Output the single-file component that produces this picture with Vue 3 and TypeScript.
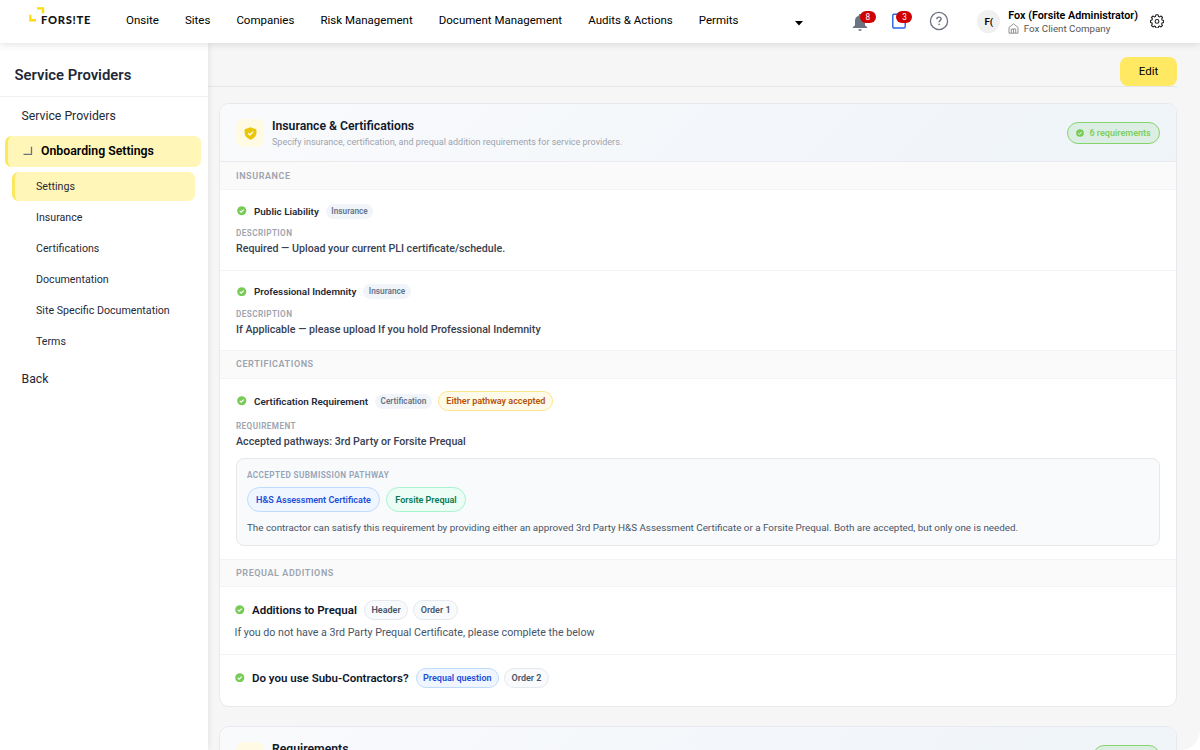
<script setup lang="ts">
interface Pill { text: string; kind: string }

const navItems: string[] = ['Onsite', 'Sites', 'Companies', 'Risk Management', 'Document Management', 'Audits & Actions', 'Permits']
const subItems: string[] = ['Settings', 'Insurance', 'Certifications', 'Documentation', 'Site Specific Documentation', 'Terms']

const insurance: { title: string; text: string }[] = [
  { title: 'Public Liability', text: 'Required — Upload your current PLI certificate/schedule.' },
  { title: 'Professional Indemnity', text: 'If Applicable — please upload If you hold Professional Indemnity' },
]

const additions: { title: string; pills: Pill[]; text?: string }[] = [
  {
    title: 'Additions to Prequal',
    pills: [{ text: 'Header', kind: 'plain' }, { text: 'Order 1', kind: 'plain' }],
    text: 'If you do not have a 3rd Party Prequal Certificate, please complete the below',
  },
  {
    title: 'Do you use Subu-Contractors?',
    pills: [{ text: 'Prequal question', kind: 'question' }, { text: 'Order 2', kind: 'plain' }],
  },
]
</script>

<template>
  <div class="app">
    <header class="topbar">
      <div class="logo">
        <svg class="logo-mark" width="16" height="15" viewBox="0 0 16 15">
          <path d="M8 .2h7.200v6h-2.400V2.500H8zM.2 7.800h2.300v4.200H7v2.400H.2z" fill="#fcdc12" />
        </svg>
        <span class="logo-text">FORS!TE</span>
      </div>
      <nav class="nav">
        <a v-for="item in navItems" :key="item">{{ item }}</a>
      </nav>
      <svg class="caret" width="8" height="5" viewBox="0 0 8 5"><path d="M0 0h8L4 4.600z" fill="#000" /></svg>
      <div class="tools">
        <div class="tool bell">
          <svg width="16" height="19" viewBox="0 0 16 19" fill="#6b7280">
            <path d="M8 1c.8 0 1.300.5 1.300 1.200v.6c2.300.6 3.700 2.500 3.700 5v4.400l2.200 2v.9H.8v-.9l2.200-2V7.800c0-2.500 1.400-4.400 3.700-5v-.6C6.700 1.500 7.200 1 8 1zM6.200 16.200h3.600a1.800 1.800 0 0 1-3.600 0z" />
          </svg>
          <span class="badge">8</span>
        </div>
        <div class="tool clip">
          <svg width="14" height="17" viewBox="0 0 14 17" fill="none" stroke="#2563eb" stroke-width="1.400">
            <rect x=".8" y="2.200" width="12.400" height="13.800" rx="1.200" />
          </svg>
          <span class="badge">3</span>
        </div>
        <svg class="help" width="20" height="20" viewBox="0 0 20 20" fill="none" stroke="#6b7280">
          <circle cx="10" cy="10" r="8.600" stroke-width="1.300" />
          <path d="M7.900 8.200c0-1.300.9-2.100 2.100-2.100s2.100.8 2.100 1.900c0 1.600-2 1.700-2 3.300" stroke-width="1.400" />
          <circle cx="10.100" cy="13.300" r=".5" fill="#6b7280" stroke-width=".7" />
        </svg>
      </div>
      <div class="avatar">F(</div>
      <div class="user">
        <div class="user-name">Fox (Forsite Administrator)</div>
        <div class="user-co">
          <svg width="11" height="11" viewBox="0 0 11 11" fill="none" stroke="#777" stroke-width=".8">
            <path d="M1 4.400 5.500.8 10 4.400v5.800H1zM3.300 10V6h4.400v4M5.500 6v4" />
          </svg>
          <span>Fox Client Company</span>
        </div>
      </div>
      <svg class="gear" width="14" height="14" viewBox="0 0 14 14" fill="none" stroke="#222" stroke-width="1.100" stroke-linejoin="round">
        <path d="M5.900.8h2.200l.4 1.600 1.100.5 1.500-.9 1.400 1.500-.8 1.400.4 1.100 1.500.5v2l-1.500.4-.5 1.100.8 1.500-1.400 1.400-1.500-.8-1 .5-.4 1.500H5.900l-.4-1.500-1.100-.5-1.400.8-1.500-1.400.8-1.500-.4-1.100L.5 8.500v-2l1.400-.5.5-1.100-.9-1.400L3 2l1.400.9 1.100-.5z" />
        <circle cx="7" cy="7.400" r="1.900" />
      </svg>
    </header>

    <div class="body">
      <aside class="sidebar">
        <div class="side-title">Service Providers</div>
        <div class="side-link">Service Providers</div>
        <div class="side-group">
          <svg width="10" height="10" viewBox="0 0 10 10" fill="none" stroke="#6b7280" stroke-width="1.300"><path d="M.5 8.400h8V.8" /></svg>
          <span>Onboarding Settings</span>
        </div>
        <div class="sub-list">
          <div v-for="(s, i) in subItems" :key="s" class="sub" :class="{ active: i === 0 }">{{ s }}</div>
        </div>
        <div class="side-link back">Back</div>
      </aside>

      <main class="main">
        <div class="toolbar"><button class="edit">Edit</button></div>

        <section class="card">
          <div class="card-head">
            <div class="card-icon">
              <svg width="13" height="13" viewBox="0 0 13 13">
                <path d="M6.500.3 12.400 2.300v3.400c0 3.300-2.400 5.700-5.900 7-3.500-1.300-5.900-3.700-5.900-7V2.300z" fill="#eac60b" />
                <path d="m4.200 6.300 1.700 1.700 3.100-3.200" fill="none" stroke="#fffbe6" stroke-width="1.300" />
              </svg>
            </div>
            <div class="card-titles">
              <div class="card-title">Insurance &amp; Certifications</div>
              <div class="card-sub">Specify insurance, certification, and prequal addition requirements for service providers.</div>
            </div>
            <div class="count">
              <svg class="check" viewBox="0 0 10 10"><circle cx="5" cy="5" r="4.800" /><path d="m2.900 5.100 1.500 1.500 2.700-2.800" /></svg>
              <span>6 requirements</span>
            </div>
          </div>

          <div class="band first">INSURANCE</div>
          <div v-for="row in insurance" :key="row.title" class="item">
            <div class="item-head">
              <svg class="check" viewBox="0 0 10 10"><circle cx="5" cy="5" r="4.800" /><path d="m2.900 5.100 1.500 1.500 2.700-2.800" /></svg>
              <span class="item-title">{{ row.title }}</span>
              <span class="tag">Insurance</span>
            </div>
            <div class="label">DESCRIPTION</div>
            <div class="value">{{ row.text }}</div>
          </div>

          <div class="band">CERTIFICATIONS</div>
          <div class="item cert">
            <div class="item-head">
              <svg class="check" viewBox="0 0 10 10"><circle cx="5" cy="5" r="4.800" /><path d="m2.900 5.100 1.500 1.500 2.700-2.800" /></svg>
              <span class="item-title">Certification Requirement</span>
              <span class="tag">Certification</span>
              <span class="either">Either pathway accepted</span>
            </div>
            <div class="label">REQUIREMENT</div>
            <div class="value">Accepted pathways: 3rd Party or Forsite Prequal</div>
            <div class="pathway">
              <div class="path-label">ACCEPTED SUBMISSION PATHWAY</div>
              <div class="path-pills">
                <span class="path-pill blue">H&amp;S Assessment Certificate</span>
                <span class="path-pill green">Forsite Prequal</span>
              </div>
              <div class="path-text">The contractor can satisfy this requirement by providing either an approved 3rd Party H&amp;S Assessment Certificate or a Forsite Prequal. Both are accepted, but only one is needed.</div>
            </div>
          </div>

          <div class="band third">PREQUAL ADDITIONS</div>
          <div v-for="row in additions" :key="row.title" class="addition">
            <div class="add-head">
              <svg class="check" viewBox="0 0 10 10"><circle cx="5" cy="5" r="4.800" /><path d="m2.900 5.100 1.500 1.500 2.700-2.800" /></svg>
              <span class="add-title">{{ row.title }}</span>
              <span v-for="p in row.pills" :key="p.text" class="pill" :class="p.kind">{{ p.text }}</span>
            </div>
            <div v-if="row.text" class="add-text">{{ row.text }}</div>
          </div>
        </section>

        <section class="card next">
          <div class="card-head">
            <div class="card-icon">
              <svg width="13" height="13" viewBox="0 0 13 13"><path d="M4 1h5v1.500h2V12H2V2.500h2z" fill="#f3e08a" /></svg>
            </div>
            <div class="card-titles">
              <div class="card-title">Requirements</div>
            </div>
            <div class="count short"></div>
          </div>
        </section>
      </main>
    </div>
  </div>
</template>

<style>
html, body { margin: 0; background: #fff; overflow: hidden; }
</style>

<style scoped>
.app, .app * { box-sizing: border-box; }
.app {
  width: 1200px; height: 750px; overflow: hidden; display: flex; flex-direction: column;
  font-family: Roboto, "Liberation Sans", sans-serif; color: #000; white-space: nowrap;
  background: #f6f6f6; border-bottom-right-radius: 20px;
}
.topbar {
  position: relative; z-index: 2; flex: none; height: 43px; background: #fff; display: flex; align-items: center;
  box-shadow: 0 1px 8px rgba(0, 0, 0, .13); padding: 0 35px 0 29px;
}
.logo { position: relative; width: 97px; height: 43px; flex: none; }
.logo-mark { position: absolute; left: 0; top: 7px; }
.logo-text { position: absolute; left: 12px; top: 12px; font: 900 11.200px/15px Lato, sans-serif; letter-spacing: .7px; color: #151515; }
.nav { display: flex; gap: 26.050px; font-size: 11.500px; line-height: 16px; margin-top: -4px; width: 668.500px; flex: none; }
.caret { flex: none; margin-top: 3px; }
.tools { display: flex; align-items: center; margin-left: 49.300px; width: 125.500px; flex: none; }
.tool { position: relative; height: 20px; flex: none; }
.bell { width: 40.700px; }
.bell svg { display: block; margin-top: 1px; }
.clip { width: 36.300px; }
.clip svg { display: block; margin-top: 0; }
.help { display: block; flex: none; margin-top: -1px; }
.badge {
  position: absolute; left: 8px; top: -1px; width: 16px; height: 12px; border-radius: 6px; background: #d00000;
  color: #fff; font-size: 8.200px; line-height: 12px; text-align: center;
}
.clip .badge { left: 4px; }
.avatar { width: 23px; height: 23px; border-radius: 50%; background: #f0f0f0; font-size: 9.840px; font-weight: 600; line-height: 23px; text-align: center; flex: none; }
.user { margin-left: 8px; width: 142px; flex: none; }
.user-name { font-size: 10.750px; font-weight: 600; line-height: 13px; }
.user-co { display: flex; align-items: center; gap: 4.500px; font-size: 9.750px; line-height: 13px; color: #555; }
.gear { flex: none; margin-top: -1px; }

.body { flex: 1; display: flex; min-height: 0; }
.sidebar { width: 208px; background: #fff; box-shadow: 1px 0 6px rgba(0, 0, 0, .08); z-index: 1; flex: none; }
.side-title { height: 54px; border-bottom: 1px solid #f1f2f4; padding: 10px 0 0 14.500px; font-size: 14.850px; font-weight: 600; line-height: 45px; color: #1f2937; }
.side-link { padding-left: 21.500px; height: 39px; line-height: 38px; font-size: 12.250px; color: #1f2937; }
.side-group {
  margin-left: 5px; width: 196px; height: 31px; border-radius: 6.500px; border-left: 3px solid #fde85d; background: #fff6b8;
  display: flex; align-items: center; gap: 8px; padding: 0 0 1px 15px; font-size: 12.300px; font-weight: 600;
}
.sub-list { margin: 4.500px 0 0 11.500px; width: 183.500px; display: flex; flex-direction: column; gap: 2px; }
.sub { height: 29.100px; line-height: 29px; padding-left: 24.500px; font-size: 10.660px; color: #1f2937; border-radius: 6.500px; }
.sub.active { background: #fff6b8; border-left: 3px solid #fde85d; padding-left: 21.500px; }
.back { margin-top: 4px; }

.main { flex: 1; min-width: 0; padding: 0 23px 0 0; }
.toolbar { height: 44px; border-bottom: 1px solid #e5e6e8; display: flex; justify-content: flex-end; padding-top: 13.500px; }
.edit { width: 57px; height: 29.500px; border: 0; border-radius: 8px; background: #ffe963; font: 400 11.500px/29px Roboto, sans-serif; padding: 0; color: #000; }
.card { margin: 16px 0 0 11px; border: 1px solid #e8e9ee; border-radius: 10px; background: #fff; height: 604px; overflow: hidden; }
.card.next { margin-top: 19px; }
.card-head {
  height: 58px; border-bottom: 1.500px solid #e9ebef; display: flex; align-items: center; padding: 0 16px;
  background: linear-gradient(135deg, #f9fafc, #eff4f9);
}
.card-icon { width: 28px; height: 28px; margin-top: 1px; border-radius: 7px; background: #fffae3; display: flex; align-items: center; justify-content: center; }
.card-titles { margin-left: 8px; flex: 1; height: 31px; padding-top: 1px; }
.card-title { font-size: 12.220px; font-weight: 600; line-height: 17px; color: #0f172a; }
.card-sub { font-size: 9.030px; line-height: 14px; color: #9ca3af; }
.count {
  display: flex; align-items: center; gap: 5px; height: 22px; padding: 0 8.300px 0 8.700px; border-radius: 11px;
  border: 1px solid #86d46c; background: #dceee3; color: #7fce62; font-size: 9.020px; font-weight: 600;
}
.count.short { width: 67px; }
.check { width: 9.500px; height: 9.500px; flex: none; display: block; }
.check circle { fill: #78cb57; }
.check path { fill: none; stroke: #fff; stroke-width: 1.200; }
.count .check { width: 8px; height: 8px; }
.band { height: 28px; padding-left: 16px; font-size: 9.020px; font-weight: 600; line-height: 27px; letter-spacing: .57px; color: #9ca3af; background: #fafafa; border-bottom: 1px solid #f3f4f6; }
.band.first { line-height: 29px; }
.band.third { border-top: 1px solid #f1f3f5; }
.item { height: 80.500px; padding: 12px 16px 0; border-bottom: 1px solid #f1f5f9; }
.item.cert { height: 180px; padding-top: 13px; border-bottom: 0; }
.item-head { display: flex; align-items: center; height: 18px; padding-left: 1px; }
.item-title { margin-left: 7.500px; font-size: 9.890px; font-weight: 600; color: #1f2937; }
.tag { margin-left: 7px; height: 15px; line-height: 15px; border-radius: 8px; padding: 0 5.500px; background: #f1f5f9; color: #64748b; font-size: 8.250px; font-weight: 600; }
.either { margin-left: 6.600px; height: 20.500px; line-height: 19.500px; border: 1px solid #fde68a; border-radius: 11px; padding: 0 7px; background: #fffbeb; color: #b45309; font-size: 9.020px; font-weight: 600; }
.label { margin-top: 7px; font-size: 8.200px; font-weight: 600; letter-spacing: .4px; line-height: 12px; color: #9ca3af; }
.cert .label { margin-top: 10px; }
.value { margin-top: 1px; font-size: 10.660px; font-weight: 500; line-height: 17px; color: #374151; }
.pathway { margin-top: 8px; height: 88px; border: 1px solid #e5e7eb; border-radius: 8px; background: #f9fafb; padding: 10px; }
.path-label { font-size: 8.200px; font-weight: 600; letter-spacing: .4px; line-height: 12px; color: #94a3b8; }
.path-pills { display: flex; gap: 6.500px; margin-top: 6px; }
.path-pill { height: 25px; line-height: 24px; border: 1px solid; border-radius: 13px; padding: 0 8px; font-size: 9.020px; font-weight: 600; }
.blue { background: #eff6ff; border-color: #bfdbfe; color: #1d4ed8; }
.green { background: #ecfdf5; border-color: #a7f3d0; color: #047857; }
.path-text { margin-top: 7.500px; font-size: 9.840px; line-height: 16px; color: #475569; }
.addition { height: 68px; padding: 13px 14.500px 0; border-bottom: 1px solid #f1f5f9; }
.addition:last-child { border-bottom: 0; padding-top: 12.500px; }
.add-head { display: flex; align-items: center; height: 20px; padding-left: .7px; }
.add-title { margin: 0 7px 0 7.300px; font-size: 11.500px; font-weight: 600; color: #0f172a; }
.pill { height: 20px; line-height: 18px; border-radius: 10px; padding: 0 6.500px; margin-right: 5px; border: 1px solid; font-size: 9.020px; font-weight: 600; }
.plain { background: #f8fafc; border-color: #e5e9ef; color: #475569; }
.question { background: #eff6ff; border-color: #bfdbfe; color: #1d4ed8; }
.add-text { margin-top: 3.500px; font-size: 10.660px; line-height: 17px; color: #475569; }
</style>
